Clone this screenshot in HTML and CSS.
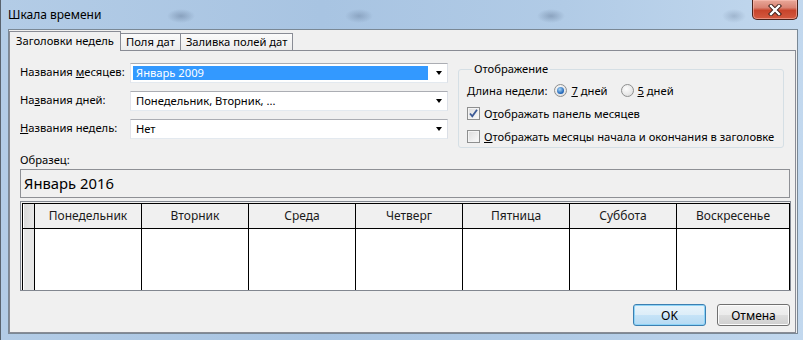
FILE: index.html
```html
<!DOCTYPE html>
<html lang="ru">
<head>
<meta charset="UTF-8">
<title>Шкала времени</title>
<link rel="stylesheet" href="styles.css">
</head>
<body>
<div class="window">
    <div class="titlebar">
        <span class="title">Шкала времени</span>
        <button class="close" aria-label="Закрыть">
            <svg width="16" height="12" viewBox="0 0 16 12">
                <path d="M4 2 L12 10 M12 2 L4 10" stroke="#3a1c16" stroke-width="4.2" stroke-linecap="square"/>
                <path d="M4 2 L12 10 M12 2 L4 10" stroke="#ffffff" stroke-width="2.4" stroke-linecap="square"/>
            </svg>
        </button>
    </div>
    <div class="client">
        <div class="tabs">
            <div class="tab active">Заголовки недель</div>
            <div class="tab">Поля дат</div>
            <div class="tab">Заливка полей дат</div>
        </div>
        <div class="panel">
            <div class="top">
                <div class="fields">
                    <label>Названия <u>м</u>есяцев:</label>
                    <div class="combo"><span class="value selected">Январь 2009</span><span class="arrow"></span></div>
                    <label>На<u>з</u>вания дней:</label>
                    <div class="combo"><span class="value">Понедельник, Вторник, ...</span><span class="arrow"></span></div>
                    <label><u>Н</u>азвания недель:</label>
                    <div class="combo"><span class="value">Нет</span><span class="arrow"></span></div>
                </div>
                <fieldset class="group">
                    <legend>Отображение</legend>
                    <div class="row">
                        <span class="week-label">Длина недели:</span>
                        <span class="radio checked"></span><span class="opt"><u>7</u> дней</span>
                        <span class="radio"></span><span class="opt"><u>5</u> дней</span>
                    </div>
                    <div class="row">
                        <span class="check checked">
                            <svg width="11" height="11" viewBox="0 0 11 11"><path d="M2 5.5 L4.3 8.3 L9 1.8" fill="none" stroke="#3c5a96" stroke-width="1.8"/></svg>
                        </span>
                        <span>О<u>т</u>ображать панель месяцев</span>
                    </div>
                    <div class="row">
                        <span class="check"></span>
                        <span><u>О</u>тображать месяцы начала и окончания в заголовке</span>
                    </div>
                </fieldset>
            </div>
            <div class="sample-label">Образец:</div>
            <div class="sample">Январь 2016</div>
            <div class="grid-wrap">
                <div class="grid">
                    <div class="cell head rowhead"></div>
                    <div class="cell head">Понедельник</div>
                    <div class="cell head">Вторник</div>
                    <div class="cell head">Среда</div>
                    <div class="cell head">Четверг</div>
                    <div class="cell head">Пятница</div>
                    <div class="cell head">Суббота</div>
                    <div class="cell head">Воскресенье</div>
                    <div class="cell rowhead"></div>
                    <div class="cell day"></div>
                    <div class="cell day"></div>
                    <div class="cell day"></div>
                    <div class="cell day"></div>
                    <div class="cell day"></div>
                    <div class="cell day"></div>
                    <div class="cell day"></div>
                </div>
            </div>
            <div class="buttons">
                <button class="btn default">OK</button>
                <button class="btn">Отмена</button>
            </div>
        </div>
    </div>
</div>
</body>
</html>
```

FILE: styles.css
```css
* {
    box-sizing: border-box;
}
body {
    margin: 0;
    font-family: 'Noto Sans', 'Open Sans', sans-serif;
    font-size: 11.2px;
    color: #000;
}
.window {
    width: 803px;
    height: 340px;
    display: flex;
    flex-direction: column;
    border-left: 1px solid #59636e;
    background:
        radial-gradient(ellipse 14px 7px at 180px 16px, rgba(70,90,120,0.35), transparent),
        radial-gradient(ellipse 14px 7px at 358px 16px, rgba(70,90,120,0.3), transparent),
        radial-gradient(ellipse 14px 7px at 550px 16px, rgba(70,90,120,0.35), transparent),
        radial-gradient(ellipse 12px 7px at 733px 16px, rgba(70,90,120,0.25), transparent),
        linear-gradient(90deg, #b3cce6 0%, #a8c4e2 40%, #b1cbe6 70%, #c2d8ee 100%);
}
.titlebar {
    height: 29px;
    display: flex;
    align-items: flex-start;
}
.title {
    padding: 6px 0 0 7px;
    font-size: 12px;
}
.close {
    margin: 0 5px 0 auto;
    width: 46px;
    height: 20px;
    padding: 0;
    border: 1px solid #4a231c;
    border-top: none;
    border-radius: 0 0 5px 5px;
    background: linear-gradient(#e9a899 0%, #d98373 40%, #c8442b 55%, #d45a40 100%);
    box-shadow: inset 0 0 0 1px rgba(255,200,190,0.5);
    display: flex;
    align-items: center;
    justify-content: center;
}
.client {
    height: 305px;
    margin: 0 5px 0 7px;
    border: 1px solid #7a8895;
    background: #f0f0f0;
    padding-top: 1px;
    display: flex;
    flex-direction: column;
}
.tabs {
    display: flex;
    align-items: flex-end;
    height: 19px;
    white-space: nowrap;
}
.tab {
    height: 17px;
    padding: 0 5px;
    border: 1px solid #898c95;
    border-bottom: none;
    border-left: none;
    line-height: 15px;
    background: linear-gradient(#fbfbfb, #ececec);
}
.tab.active {
    height: 20px;
    padding: 0 6px;
    border-left: 1px solid #898c95;
    background: #f0f0f0;
    line-height: 18px;
    position: relative;
    z-index: 1;
    margin-bottom: -1px;
}
.panel {
    height: 283px;
    margin-right: 1px;
    border: 1px solid #898c95;
}
.top {
    display: flex;
    padding: 12px 0 0 10px;
}
.fields {
    display: grid;
    grid-template-columns: 110px 318px;
    grid-auto-rows: 20px;
    row-gap: 8px;
    white-space: nowrap;
}
.fields label {
    line-height: 16px;
    padding-top: 1px;
}
.combo {
    display: flex;
    align-items: center;
    background: #fff;
    border: 1px solid;
    border-color: #abadb3 #dbdfe6 #e3e9ef #e2e3ea;
    padding: 2px;
}
.value {
    flex: 1;
    height: 14px;
    line-height: 14px;
    padding-left: 3px;
}
.value.selected {
    background: #3399ff;
    color: #fff;
}
.arrow {
    width: 17px;
    height: 14px;
    position: relative;
}
.arrow::after {
    content: '';
    position: absolute;
    left: 8px;
    top: 5px;
    border-left: 3.5px solid transparent;
    border-right: 3.5px solid transparent;
    border-top: 4px solid #000;
}
.group {
    margin: -2px 0 0 10px;
    width: 326px;
    height: 87px;
    padding: 5px 8px 2px 8px;
    border: 1px solid #d5dfe5;
    border-radius: 3px;
    display: flex;
    flex-direction: column;
    gap: 7px;
    white-space: nowrap;
}
.group legend {
    padding: 0 2px;
    margin-left: 5px;
    line-height: 16px;
}
.row {
    display: flex;
    align-items: center;
    height: 16px;
}
.week-label {
    margin-right: 7px;
}
.radio {
    width: 13px;
    height: 13px;
    border-radius: 50%;
    border: 1px solid #8e8f8f;
    background: radial-gradient(circle at 40% 35%, #fdfdfd, #d8d8d8);
    margin-right: 4px;
    position: relative;
}
.radio.checked::after {
    content: '';
    position: absolute;
    left: 2px;
    top: 2px;
    width: 7px;
    height: 7px;
    border-radius: 50%;
    background: radial-gradient(circle at 40% 35%, #a9d8f8, #1a5fb4 70%);
}
.opt {
    margin-right: 13px;
}
.check {
    width: 13px;
    height: 13px;
    border: 1px solid #8e8f8f;
    background: linear-gradient(135deg, #dcdcdc, #fbfbfb);
    box-shadow: inset 0 0 0 1px #f4f4f4;
    margin-right: 4px;
    display: flex;
    align-items: center;
    justify-content: center;
}
.check svg {
    display: block;
}
.sample-label {
    margin-top: 4px;
    padding-left: 10px;
    line-height: 16px;
}
.sample {
    margin: 1px 0 0 10px;
    width: 770px;
    height: 29px;
    border: 1px solid #8e9095;
    font-size: 14.8px;
    line-height: 26px;
    padding-left: 3px;
}
.grid-wrap {
    margin: 3px 0 0 10px;
    width: 771px;
    height: 90px;
    border: 1px solid #828790;
    padding: 1px 0 0 1px;
}
.grid {
    height: 100%;
    display: grid;
    grid-template-columns: 12px repeat(6, 107px) 1fr;
    grid-template-rows: 25px 1fr;
    border-left: 1px solid #000;
    border-top: 1px solid #000;
}
.cell {
    border-right: 1px solid #000;
}
.cell.head {
    border-bottom: 1px solid #000;
    text-align: center;
    line-height: 23px;
    font-size: 12px;
    color: #1a1a1a;
}
.cell.day {
    background: #fff;
}
.rowhead {
    background: linear-gradient(90deg, #fff 0 1px, #e6e6e6 1px);
}
.cell.head.rowhead {
    background: linear-gradient(90deg, #fff 0 1px, #d9d9d9 1px, #e8e8e8);
}
.buttons {
    display: flex;
    justify-content: flex-end;
    gap: 11px;
    padding-right: 5px;
    margin-top: 13px;
}
.btn {
    width: 73px;
    height: 22px;
    font-family: inherit;
    font-size: 12px;
    border: 1px solid #707070;
    border-radius: 3px;
    background: linear-gradient(#f2f2f2 0%, #ebebeb 50%, #dddddd 51%, #cfcfcf 100%);
    box-shadow: inset 0 0 0 1px #fcfcfc;
    padding: 0;
}
.btn.default {
    border-color: #3c7fb1;
    background: linear-gradient(#e8f4fb 0%, #dcedf8 50%, #c5e3f7 51%, #b6daf3 100%);
    box-shadow: inset 0 0 0 1px #8ed4f7;
}
```
